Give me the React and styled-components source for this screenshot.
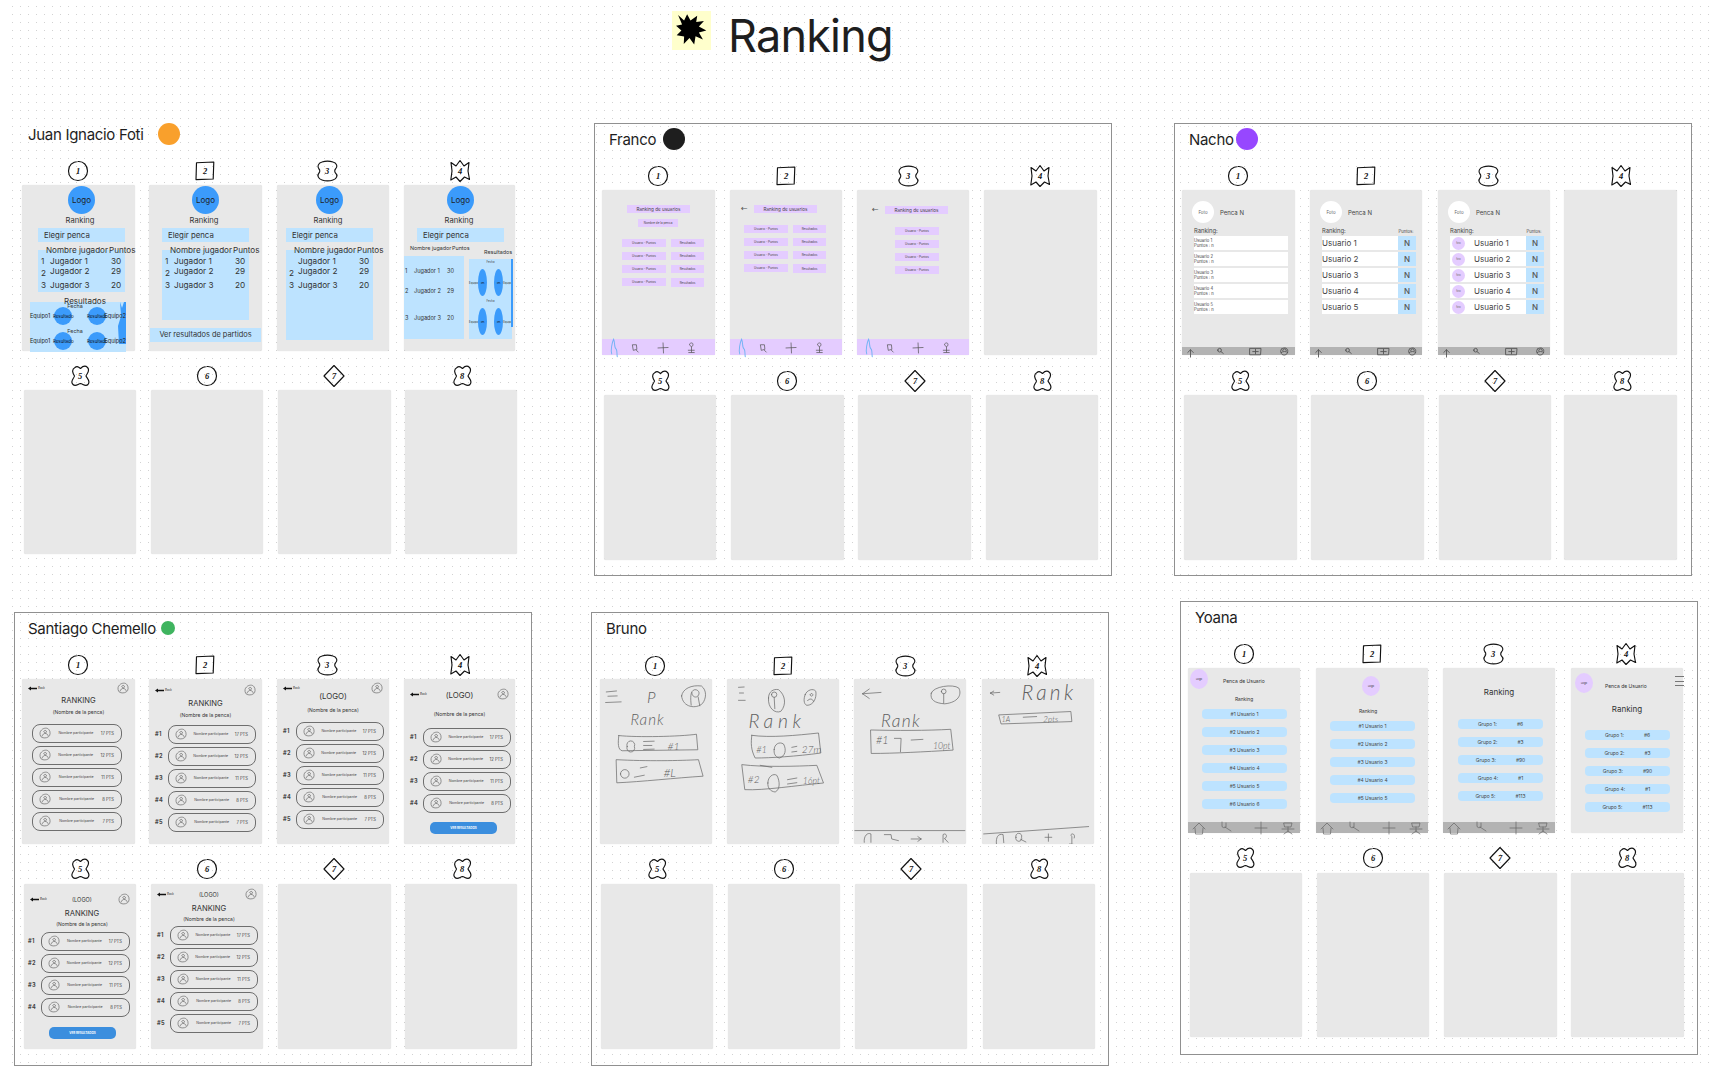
import React from "react";
import styled, { createGlobalStyle } from "styled-components";

const GlobalStyle = createGlobalStyle`
  body {
    margin: 0;
    background: #fff;
    overflow: hidden;
    font-family: Inter, "Liberation Sans", sans-serif;
    color: #1e1e1e;
  }
`;

const BLUE = "#bde3ff";
const VIOLET = "#e4ccff";
const LOGO_BLUE = "#3b9bfb";
const GREY_BAR = "#b3b3b3";

/* ---------- board ---------- */

const Board = styled.main`
  position: relative;
  box-sizing: border-box;
  width: 1722px;
  height: 1070px;
  padding-left: 8px;
  padding-right: 8px;
  background-color: #fff;
  background-image: radial-gradient(circle at 4.5px 4.5px, #d2d2d2 0.7px, transparent 0.95px);
  background-size: 8px 8px;
  background-position: 0 2px;
  background-clip: content-box;
  overflow: hidden;
`;

const TitleBlock = styled.header`
  position: absolute;
  left: 672px;
  top: 11px;
  display: flex;
  align-items: center;
  gap: 17px;
  height: 39px;
`;

const StickyNote = styled.div`
  width: 39px;
  height: 39px;
  background: #ffffcc;
`;

const PageTitle = styled.h1`
  margin: 0;
  font-size: 45px;
  font-weight: 400;
  letter-spacing: -0.8px;
  line-height: 46px;
  position: relative;
  top: 5px;
  color: #1e1e1e;
`;

const Frame = styled.section`
  position: absolute;
  box-sizing: border-box;
  left: ${(p) => p.$x}px;
  top: ${(p) => p.$y}px;
  width: ${(p) => p.$w}px;
  height: ${(p) => p.$h}px;
  border: 1px solid #909090;
`;

const OwnerTag = styled.div`
  position: absolute;
  left: ${(p) => p.$x}px;
  top: ${(p) => p.$y - 11}px;
  height: 22px;
  display: flex;
  align-items: center;
`;

const OwnerName = styled.h2`
  margin: 0;
  font-size: 15px;
  font-weight: 400;
  letter-spacing: -0.3px;
  white-space: nowrap;
  color: #1e1e1e;
`;

const OwnerDot = styled.span`
  position: absolute;
  left: ${(p) => p.$left}px;
  top: ${(p) => 11 - p.$size / 2}px;
  width: ${(p) => p.$size}px;
  height: ${(p) => p.$size}px;
  border-radius: 50%;
  background: ${(p) => p.$color};
`;

const Phone = styled.article`
  position: absolute;
  box-sizing: border-box;
  left: ${(p) => p.$x}px;
  top: ${(p) => p.$y}px;
  width: ${(p) => p.$w}px;
  height: ${(p) => p.$h}px;
  display: flex;
  flex-direction: column;
  background: #e8e8e8;
  border-radius: 2px;
  box-shadow: 0 0 1px rgba(0, 0, 0, 0.18);
`;

/* ---------- numbered badges ---------- */

const BadgeWrap = styled.div`
  position: absolute;
  left: ${(p) => p.$x - 12}px;
  top: ${(p) => p.$y - 12}px;
  width: 24px;
  height: 24px;
`;

const BadgeNumber = styled.span`
  position: absolute;
  inset: 0;
  display: flex;
  align-items: center;
  justify-content: center;
  font: italic 700 8.5px "Liberation Serif", serif;
  color: #111;
`;

const PEANUT = "M7 3C10 2 15 2 18 3C22 4 23 8 20.5 10C19.5 11 19.5 13 20.5 14C23 16 22 20 18 21C15 22 10 22 7 21C3 20 2 16 4 14C5 13 5 11 4 10C2 8 3 4 7 3Z";
const CROSS = "M7 3.5C9 1.5 11 3 12.5 4.5C14 3 17 1 19.5 3.5C22.5 6.5 19 9.5 18 12C19 14.5 23 17 20 20.5C17.5 23 15 20 12.5 19.5C10 20 7.5 23 5 20.5C1.5 17.5 6 14.5 6.5 12C5 9.5 3 5.5 7 3.5Z";
const BADGE_SHAPES = [
  "M12 2.5C17.5 2 21.5 6.5 21.5 12C21.5 17.5 17 21.5 12 21.5C6.5 21.5 2.5 17.5 2.5 12C2.5 6.5 6.5 2.5 12 2.5Z",
  "M3.5 3.8L20.8 3L20.2 20L3 20.6Z",
  PEANUT,
  "M3 3.5L8 7L12 1.5L16 7L21 3.5L20 12L21.5 20.5L16.5 18L12 22.5L8 18L2.8 21L4 12Z",
  CROSS,
  "M12 2.5C17.5 2 21.5 6.5 21.5 12C21.5 17.5 17 21.5 12 21.5C6.5 21.5 2.5 17.5 2.5 12C2.5 6.5 6.5 2.5 12 2.5Z",
  "M12 1.5L22 12L12 22.5L2 12Z",
  CROSS,
];

function Badge({ x, y, n }) {
  return (
    <BadgeWrap $x={x} $y={y}>
      <svg width="24" height="24" viewBox="0 0 24 24" fill="none" stroke="#111" strokeWidth="1.15" strokeLinejoin="round">
        <path d={BADGE_SHAPES[n - 1]} />
      </svg>
      <BadgeNumber>{n}</BadgeNumber>
    </BadgeWrap>
  );
}

/* ---------- toolbar icons ---------- */

function Sketch({ size = 11, color = "#555", width = 0.8, children }) {
  return (
    <svg width={size} height={size} viewBox="0 0 12 12" fill="none" stroke={color} strokeWidth={width} strokeLinecap="round" style={{ overflow: "visible" }}>
      {children}
    </svg>
  );
}

const ScribbleHome = () => (
  <Sketch color="#76b4f5" width={1.1}>
    <path d="M3 13C1.5 9 3.5 0 5 -3C7 1 5 6 8 8C9 10 8.5 13 9 16" />
  </Sketch>
);
const ScribbleSearch = () => (
  <Sketch>
    <path d="M3 3L7 3L7.5 8L4 9ZM7 9L9 11" />
  </Sketch>
);
const ScribblePlus = () => (
  <Sketch>
    <path d="M0 6.5L11 6M5.5 1L6 12" />
  </Sketch>
);
const ScribblePerson = () => (
  <Sketch>
    <path d="M4 2C6 0 8 1 7.5 3.5C7 5.5 5 5.5 4.5 4ZM6 5.5L6 11M2.5 9L9 9M3 11.5L9 11.5" />
  </Sketch>
);
const UpArrow = () => (
  <Sketch color="#555" width={1}>
    <path d="M6 11L6 3M3 6L6 3L9 6" />
  </Sketch>
);
const TinySearch = () => (
  <Sketch color="#555" width={1}>
    <path d="M3 3.5A2 2 0 1 1 7 3.5A2 2 0 1 1 3 3.5ZM6.5 5L9 7" />
  </Sketch>
);
const FolderPlus = () => (
  <Sketch color="#555" width={1}>
    <path d="M0 1.5L12 1.5L11.5 8.5L0 8.5ZM3 5L9 5M6 2.5L6 7.5" />
  </Sketch>
);
const UserRing = () => (
  <Sketch color="#555" width={1}>
    <path d="M3 2C6 0 10 1 9.5 5C9.5 9 4 10 2.5 7C1.5 5 1.5 3.5 3 2ZM4 4A2 2 0 0 1 8 4M2.5 6C4 4.5 8 4.5 9.5 6" />
  </Sketch>
);
const HouseLine = () => (
  <Sketch size={12} color="#666" width={0.7}>
    <path d="M0 7L6 1L12 7M2 6L2.5 12L9.5 12L10 6" />
  </Sketch>
);
const MagnifierLine = () => (
  <Sketch size={12} color="#666" width={0.7}>
    <path d="M1 0L1 4C1 6 4 6 5 5L5 1M4 5L10 9" />
  </Sketch>
);
const PlusLine = () => (
  <Sketch size={12} color="#666" width={0.7}>
    <path d="M0 6L12 6M6 0L6 12" />
  </Sketch>
);
const PersonLine = () => (
  <Sketch size={12} color="#666" width={0.7}>
    <path d="M2 1L10 1L9 5L3 5ZM6 5L6 9M0 7L12 7M6 9L2 12M6 9L10 12" />
  </Sketch>
);

const Toolbar = styled.nav`
  display: grid;
  grid-template-columns: ${(p) => p.$cols};
  align-items: center;
  justify-items: start;
  box-sizing: border-box;
  margin-top: auto;
  height: ${(p) => p.$h}px;
  padding-left: ${(p) => p.$left}px;
  background: ${(p) => p.$bg};
`;

/* ---------- Juan ---------- */

const JuanColumn = styled.div`
  width: 87px;
  margin-left: ${(p) => p.$inset}px;
  display: flex;
  flex-direction: column;
  padding-top: 1px;
`;

const LogoCircle = styled.div`
  align-self: center;
  width: 27px;
  height: 28px;
  border-radius: 50%;
  background: ${LOGO_BLUE};
  display: flex;
  align-items: center;
  justify-content: center;
  font-size: 8px;
  color: #1e1e1e;
`;

const JuanTitle = styled.div`
  text-align: center;
  margin: 2px 3px 0 0;
  font-size: 7.6px;
  line-height: 10px;
  color: #333;
`;

const PickerBar = styled.div`
  margin-top: 2px;
  height: 14px;
  line-height: 14px;
  padding-left: 6px;
  font-size: 7.8px;
  background: ${BLUE};
  color: #333;
`;

const TableHead = styled.div`
  display: flex;
  gap: 1px;
  margin-top: 3px;
  height: 10px;
  padding-left: 8px;
  font-size: 8.1px;
  line-height: 10px;
  white-space: nowrap;
  color: #333;
  position: relative;
  z-index: 1;
`;

const ScorePanel = styled.div`
  margin-top: -5px;
  padding-top: 6px;
  height: ${(p) => p.$h}px;
  box-sizing: border-box;
  background: ${BLUE};
`;

const ScoreRow = styled.div`
  display: grid;
  grid-template-columns: 12px 61px 13px;
  height: ${(p) => p.$h}px;
  line-height: 10px;
  font-size: 8.2px;
  color: #333;
`;

const ScoreRank = styled.span`
  padding-left: 3px;
  position: relative;
  top: ${(p) => p.$drop || 0}px;
`;

const ResultsPanel = styled.div`
  position: relative;
  box-sizing: border-box;
  margin: 10px 0 0 -8px;
  width: 96px;
  height: 50px;
  background: ${BLUE};
`;

const ResultsTitle = styled.div`
  position: absolute;
  top: -6px;
  left: 14px;
  right: 0;
  text-align: center;
  font-size: 8px;
  line-height: 10px;
  color: #333;
`;

const MatchStack = styled.div`
  display: flex;
  flex-direction: column;
  gap: 3px;
  padding-top: 1px;
`;

const Match = styled.div`
  display: flex;
  flex-direction: column;
  align-items: center;
  height: 22px;
`;

const MatchDate = styled.div`
  font-size: 5.4px;
  line-height: 6px;
  margin-right: 6px;
  height: 4px;
  color: #333;
`;

const MatchLine = styled.div`
  display: flex;
  align-items: center;
  width: 96px;
  justify-content: space-between;
  font-size: 5.6px;
  color: #222;
  position: relative;
  z-index: 1;
`;

const ResultBubble = styled.div`
  width: 18px;
  height: 18px;
  border-radius: 50%;
  background: ${LOGO_BLUE};
  display: flex;
  align-items: center;
  justify-content: center;
  font-size: 4.4px;
  color: #111;
`;

const BubblePair = styled.div`
  display: flex;
  gap: 16px;
  margin: 0 -8px 0 -2px;
`;

const Ribbon = styled.svg`
  position: absolute;
  right: 0;
  top: 0;
`;

const WideBar = styled.div`
  margin: ${(p) => p.$top}px 0 0 1px;
  width: 111px;
  height: 14px;
  line-height: 14px;
  text-align: center;
  font-size: 7.4px;
  background: ${BLUE};
  color: #333;
`;

const NarrowHead = styled.div`
  display: flex;
  height: 8px;
  font-size: 5.4px;
  line-height: 8px;
  padding-left: 6px;
  white-space: nowrap;
  color: #333;
  margin-top: 2px;
`;

const NarrowHeadCell = styled.span`
  width: ${(p) => p.$w}px;
  position: relative;
  top: ${(p) => p.$drop || 0}px;
`;

const SplitPanels = styled.div`
  display: flex;
  gap: 5px;
  align-items: flex-end;
  height: 83px;
  margin-top: 4px;
`;

const LeftPanel = styled.div`
  box-sizing: border-box;
  width: 60px;
  height: 83px;
  padding-top: 11px;
  background: ${BLUE};
`;

const NarrowRow = styled.div`
  display: grid;
  grid-template-columns: 9px 33px 12px;
  height: ${(p) => p.$h}px;
  font-size: 5.6px;
  line-height: 8px;
  padding-left: 1px;
  color: #333;
`;

const RightPanel = styled.div`
  position: relative;
  box-sizing: border-box;
  width: 43px;
  height: 80px;
  padding-top: 1px;
  background: ${BLUE};
`;

const TallMatch = styled.div`
  display: flex;
  flex-direction: column;
  align-items: center;
  margin-bottom: 3px;
`;

const TinyDate = styled.div`
  font-size: 2.8px;
  height: 9px;
  line-height: 4px;
  color: #444;
`;

const TallLine = styled.div`
  display: flex;
  align-items: center;
  justify-content: space-between;
  width: 43px;
  font-size: 2.8px;
  color: #333;
`;

const TallBubble = styled.div`
  width: 9px;
  height: 27px;
  border-radius: 50%;
  background: ${LOGO_BLUE};
  display: flex;
  align-items: center;
  justify-content: center;
  font-size: 2px;
  color: #111;
`;

const TallPair = styled.div`
  display: flex;
  gap: 7px;
`;

const RightStripe = styled.span`
  position: absolute;
  right: -1px;
  top: 0;
  width: 2px;
  height: 68px;
  background: ${LOGO_BLUE};
`;

const juanScores = [
  { rank: "1", name: "Jugador 1", pts: 30, h: 10 },
  { rank: "2", name: "Jugador 2", pts: 29, h: 14, drop: 2 },
  { rank: "3", name: "Jugador 3", pts: 20, h: 10 },
];

function JuanHeader() {
  return (
    <>
      <LogoCircle>Logo</LogoCircle>
      <JuanTitle>Ranking</JuanTitle>
      <PickerBar>Elegir penca</PickerBar>
    </>
  );
}

function JuanTable({ h, hideFirstRank }) {
  return (
    <>
      <TableHead>
        <span>Nombre jugador</span>
        <span>Puntos</span>
      </TableHead>
      <ScorePanel $h={h}>
        {juanScores.map((row, i) => (
          <ScoreRow key={row.name} $h={row.h}>
            <ScoreRank $drop={row.drop}>{hideFirstRank && i === 0 ? "" : row.rank}</ScoreRank>
            <span>{row.name}</span>
            <span>{row.pts}</span>
          </ScoreRow>
        ))}
      </ScorePanel>
    </>
  );
}

function JuanMatch() {
  return (
    <Match>
      <MatchDate>Fecha</MatchDate>
      <MatchLine>
        <span>Equipo1</span>
        <BubblePair>
          <ResultBubble>Resultado</ResultBubble>
          <ResultBubble>Resultado</ResultBubble>
        </BubblePair>
        <span>Equipo2</span>
      </MatchLine>
    </Match>
  );
}

function JuanOne() {
  return (
    <JuanColumn $inset={16}>
      <JuanHeader />
      <JuanTable h={42} />
      <ResultsPanel>
        <ResultsTitle>Resultados</ResultsTitle>
        <MatchStack>
          <JuanMatch />
          <JuanMatch />
        </MatchStack>
        <Ribbon width="8" height="42" viewBox="0 0 8 42">
          <path d="M2 0L4 6L6 0L8 0L8 42L1 42L0 24L3 14Z" fill={LOGO_BLUE} />
        </Ribbon>
      </ResultsPanel>
    </JuanColumn>
  );
}

function JuanTwo() {
  return (
    <>
      <JuanColumn $inset={13}>
        <JuanHeader />
        <JuanTable h={70} />
      </JuanColumn>
      <WideBar $top={8}>Ver resultados de partidos</WideBar>
    </>
  );
}

function JuanThree() {
  return (
    <JuanColumn $inset={9}>
      <JuanHeader />
      <JuanTable h={90} hideFirstRank />
    </JuanColumn>
  );
}

function TallMatchRow() {
  return (
    <TallMatch>
      <TinyDate>Fecha</TinyDate>
      <TallLine>
        <span>Equipo</span>
        <TallPair>
          <TallBubble>Res</TallBubble>
          <TallBubble>Res</TallBubble>
        </TallPair>
        <span>Equipo</span>
      </TallLine>
    </TallMatch>
  );
}

function JuanFour() {
  return (
    <>
      <JuanColumn $inset={13}>
        <JuanHeader />
      </JuanColumn>
      <NarrowHead>
        <NarrowHeadCell $w={42}>Nombre jugador</NarrowHeadCell>
        <NarrowHeadCell $w={32}>Puntos</NarrowHeadCell>
        <NarrowHeadCell $w={20} $drop={4}>Resultados</NarrowHeadCell>
      </NarrowHead>
      <SplitPanels>
        <LeftPanel>
          <NarrowRow $h={20}><span>1</span><span>Jugador 1</span><span>30</span></NarrowRow>
          <NarrowRow $h={27}><span>2</span><span>Jugador 2</span><span>29</span></NarrowRow>
          <NarrowRow $h={10}><span>3</span><span>Jugador 3</span><span>20</span></NarrowRow>
        </LeftPanel>
        <RightPanel>
          <RightStripe />
          <TallMatchRow />
          <TallMatchRow />
        </RightPanel>
      </SplitPanels>
    </>
  );
}

/* ---------- Franco ---------- */

const FrancoBody = styled.div`
  flex: 1;
  display: flex;
  flex-direction: column;
  padding: ${(p) => p.$top}px 0 0 ${(p) => p.$left}px;
`;

const ChipRow = styled.div`
  display: flex;
  align-items: center;
`;

const BackArrow = styled.span`
  width: ${(p) => p.$w}px;
  font-size: 8px;
  line-height: 8px;
  color: #555;
  font-family: "DejaVu Sans", sans-serif;
`;

const Chip = styled.div`
  box-sizing: border-box;
  width: ${(p) => p.$w}px;
  height: ${(p) => p.$h || 8}px;
  margin-top: ${(p) => p.$mt || 0}px;
  margin-left: ${(p) => p.$ml || 0}px;
  display: flex;
  align-items: center;
  justify-content: center;
  background: ${VIOLET};
  font-size: ${(p) => p.$size || 3}px;
  white-space: nowrap;
  color: #444;
`;

const FrancoGrid = styled.div`
  display: grid;
  grid-template-columns: ${(p) => (p.$results ? "49px 34px" : "44px")};
  row-gap: 5px;
  margin: ${(p) => p.$top}px 0 0 ${(p) => p.$left}px;
`;

const francoBar = (
  <Toolbar $h={16} $left={7} $bg={VIOLET} $cols="21px 28px 28px 28px">
    <ScribbleHome />
    <ScribbleSearch />
    <ScribblePlus />
    <ScribblePerson />
  </Toolbar>
);

function FrancoRows({ results, top, left }) {
  return (
    <FrancoGrid $results={results} $top={top} $left={left}>
      {[0, 1, 2, 3].map((i) => (
        <React.Fragment key={i}>
          <Chip $w={44}>Usuario - Puntos</Chip>
          {results && <Chip $w={33} $h={i === 3 ? 9 : 8}>Resultados</Chip>}
        </React.Fragment>
      ))}
    </FrancoGrid>
  );
}

function FrancoOne() {
  return (
    <>
      <FrancoBody $top={15} $left={25}>
        <Chip $w={63} $size={4.6}>Ranking de usuarios</Chip>
        <Chip $w={40} $mt={6} $ml={11}>Nombre de la penca</Chip>
        <FrancoRows results top={12} left={-5} />
      </FrancoBody>
      {francoBar}
    </>
  );
}

function FrancoTwo() {
  return (
    <>
      <FrancoBody $top={15} $left={11}>
        <ChipRow>
          <BackArrow $w={13}>←</BackArrow>
          <Chip $w={63} $size={4.6}>Ranking de usuarios</Chip>
        </ChipRow>
        <FrancoRows results top={12} left={3} />
      </FrancoBody>
      {francoBar}
    </>
  );
}

function FrancoThree() {
  return (
    <>
      <FrancoBody $top={16} $left={15}>
        <ChipRow>
          <BackArrow $w={13}>←</BackArrow>
          <Chip $w={63} $size={4.6}>Ranking de usuarios</Chip>
        </ChipRow>
        <FrancoRows top={13} left={23} />
      </FrancoBody>
      {francoBar}
    </>
  );
}

/* ---------- Nacho ---------- */

const NachoBody = styled.div`
  flex: 1;
  padding: 11px 7px 0 ${(p) => p.$left}px;
`;

const PencaRow = styled.div`
  display: flex;
  align-items: center;
  gap: 6px;
  margin-left: ${(p) => p.$ml}px;
  font-size: 6px;
  color: #444;
`;

const PhotoCircle = styled.div`
  width: 22px;
  height: 22px;
  border-radius: 50%;
  background: #fff;
  display: flex;
  align-items: center;
  justify-content: center;
  font-size: 4.4px;
  color: #666;
`;

const RankHead = styled.div`
  display: flex;
  justify-content: space-between;
  align-items: flex-end;
  margin-top: 3px;
  height: 8px;
  font-size: 5.8px;
  color: #444;
`;

const PointsLabel = styled.span`
  font-size: 4.2px;
  width: 18px;
  text-align: center;
`;

const NachoList = styled.div`
  display: flex;
  flex-direction: column;
  gap: 2px;
  margin-top: 2px;
`;

const NachoRow = styled.div`
  display: flex;
  align-items: center;
  height: 14px;
  width: 94px;
  background: #fff;
`;

const StackedUser = styled.div`
  font-size: 4.2px;
  line-height: 5.4px;
  color: #444;
`;

const UserName = styled.span`
  flex: 1;
  font-size: 8px;
  color: #444;
`;

const NBox = styled.div`
  width: 18px;
  height: 14px;
  display: flex;
  align-items: center;
  justify-content: center;
  background: ${BLUE};
  font-size: 8px;
  font-weight: 500;
  color: #555;
`;

const MiniPhoto = styled.div`
  width: 13px;
  height: 13px;
  margin: 0 9px 0 2px;
  border-radius: 50%;
  background: ${VIOLET};
  display: flex;
  align-items: center;
  justify-content: center;
  font-size: 2.4px;
  color: #666;
`;

const nachoBar = (
  <Toolbar $h={8} $left={3} $bg={GREY_BAR} $cols="30px 35px 29px 20px">
    <UpArrow />
    <TinySearch />
    <FolderPlus />
    <UserRing />
  </Toolbar>
);

const usuarios = [1, 2, 3, 4, 5];

function NachoScreen({ kind, left, penca }) {
  return (
    <>
      <NachoBody $left={left}>
        <PencaRow $ml={penca}>
          <PhotoCircle>Foto</PhotoCircle>
          <span>Penca N</span>
        </PencaRow>
        <RankHead>
          <span>Ranking:</span>
          {kind !== "plain" && <PointsLabel>Puntos:</PointsLabel>}
        </RankHead>
        <NachoList>
          {usuarios.map((n) => (
            <NachoRow key={n}>
              {kind === "plain" && (
                <StackedUser>
                  Usuario {n}
                  <br />
                  Puntos : n
                </StackedUser>
              )}
              {kind === "photo" && <MiniPhoto>foto</MiniPhoto>}
              {kind !== "plain" && <UserName>Usuario {n}</UserName>}
              {kind !== "plain" && <NBox>N</NBox>}
            </NachoRow>
          ))}
        </NachoList>
      </NachoBody>
      {nachoBar}
    </>
  );
}

/* ---------- Santiago ---------- */

const BackLink = styled.div`
  display: flex;
  align-items: center;
  gap: 1px;
  font-size: 3px;
  color: #333;
`;

const TopBar = styled.div`
  position: absolute;
  left: 6px;
  right: 6px;
  top: ${(p) => p.$y - 6}px;
  height: 12px;
  display: flex;
  align-items: center;
  justify-content: space-between;
`;

const HeadText = styled.div`
  text-align: center;
  margin-top: ${(p) => p.$mt || 0}px;
  padding-left: ${(p) => p.$nudge || 0}px;
  font-size: ${(p) => p.$size}px;
  line-height: ${(p) => p.$lh}px;
  color: #333;
`;

const SantiagoBody = styled.div`
  padding-top: ${(p) => p.$top}px;
`;

const PillList = styled.div`
  display: flex;
  flex-direction: column;
  gap: 3.5px;
  margin-top: ${(p) => p.$mt}px;
  padding-left: ${(p) => p.$left}px;
`;

const PillRow = styled.div`
  display: flex;
  align-items: center;
`;

const PillRank = styled.span`
  width: 13px;
  font-size: 5.6px;
  font-weight: 700;
  letter-spacing: 0.4px;
  color: #444;
`;

const Pill = styled.div`
  box-sizing: border-box;
  width: ${(p) => p.$w}px;
  height: 18.5px;
  display: flex;
  align-items: center;
  padding: 0 7px 0 6px;
  border: 1px solid #6e6e6e;
  border-bottom-width: 1.4px;
  border-radius: 8px;
`;

const PillName = styled.span`
  flex: 1;
  text-align: center;
  font-size: 3.6px;
  color: #444;
`;

const PillPoints = styled.span`
  font-size: 4.2px;
  color: #444;
`;

const ResultsButton = styled.div`
  position: absolute;
  left: ${(p) => p.$x}px;
  top: 143px;
  width: 67px;
  height: 12px;
  border-radius: 5px;
  background: #3b8ede;
  display: flex;
  align-items: center;
  justify-content: center;
  font-size: 3px;
  font-weight: 700;
  color: #fff;
`;

function CloudAvatar({ size = 12 }) {
  return (
    <svg width={size} height={size} viewBox="0 0 14 14" fill="none" stroke="#666" strokeWidth="0.8">
      <path d="M3 3.5C5 1 10 0.5 11.5 3C13.5 5 13.5 10 11 11.5C8 13.5 3.5 13 2 11C0.5 8 1 5 3 3.5Z" />
      <path d="M5.5 5.5C6 3.5 8.5 3.5 8.8 5.5C9 6.8 6.5 7.4 5.5 5.5ZM3.5 11C4 8.5 6 7.5 7 7.5C9 7.5 10.5 9 10.8 10.5" />
    </svg>
  );
}

function ThickBack() {
  return (
    <BackLink>
      <svg width="9" height="5" viewBox="0 0 9 5">
        <path d="M0 2.5L3 0.5L3 1.7L9 1.7L9 3.3L3 3.3L3 4.5Z" fill="#111" />
      </svg>
      <span>Back</span>
    </BackLink>
  );
}

const santiagoPoints = [17, 12, 11, 8, 7];

function SantiagoScreen({ back, top, nudge, heads, gap, pills, ranks, left, w, button }) {
  return (
    <>
      <TopBar $y={back}>
        <ThickBack />
        <CloudAvatar />
      </TopBar>
      <SantiagoBody $top={top}>
        {heads.map((head) => (
          <HeadText key={head.text} $mt={head.mt} $nudge={nudge} $size={head.size} $lh={head.lh}>
            {head.text}
          </HeadText>
        ))}
        <PillList $mt={gap} $left={left}>
          {santiagoPoints.slice(0, pills).map((pts, i) => (
            <PillRow key={pts}>
              {ranks && <PillRank>#{i + 1}</PillRank>}
              <Pill $w={w}>
                <CloudAvatar size={12} />
                <PillName>Nombre participante</PillName>
                <PillPoints>{pts} PTS</PillPoints>
              </Pill>
            </PillRow>
          ))}
        </PillList>
      </SantiagoBody>
      {button !== undefined && <ResultsButton $x={button}>VER RESULTADOS</ResultsButton>}
    </>
  );
}

const RANKING_HEAD = { text: "RANKING", size: 7.6, lh: 10 };
const LOGO_HEAD = { text: "(LOGO)", size: 7.8, lh: 10 };
const SMALL_LOGO = { text: "(LOGO)", size: 5.6, lh: 10 };
const penca = (mt) => ({ text: "(Nombre de la penca)", size: 5, lh: 7, mt });

/* ---------- Bruno: pencil sketches ---------- */

const SketchSheet = styled.svg`
  width: 100%;
  height: 100%;
  display: block;
`;

const Pencil = styled.g`
  fill: none;
  stroke: #6a6a6a;
  stroke-width: 2.2;
  stroke-linecap: round;
  stroke-linejoin: round;
`;

const Scrawl = styled.text`
  font-family: Lato, "Open Sans", sans-serif;
  font-style: italic;
  font-weight: 300;
  fill: #5f5f5f;
  font-size: ${(p) => p.$size}px;
  letter-spacing: ${(p) => p.$gap || 0}px;
`;

function BrunoOne() {
  return (
    <SketchSheet viewBox="8 3 339 495">
      <Pencil>
        <path d="M27 40L58 37M32 53L60 52M25 72L72 70" />
        <path d="M255 52C258 30 285 18 315 22C332 35 330 60 318 75C300 92 258 88 255 52Z" />
        <path d="M284 80C282 60 280 36 295 33C310 33 312 50 300 55C292 57 286 50 286 42M305 55L310 82" />
        <path d="M65 172C120 178 250 175 300 168L304 215L75 218C62 215 62 195 65 172Z" />
        <path d="M90 205A12 12 0 1 1 112 205A12 12 0 1 1 90 205ZM140 190L172 189M140 202L165 202M140 214L172 213" />
        <path d="M58 245C150 250 250 248 306 245L320 295C240 300 130 312 60 315Z" />
        <path d="M70 288A13 13 0 1 1 96 288A13 13 0 1 1 70 288ZM112 298L142 292M130 270L150 266" />
      </Pencil>
      <Scrawl x="150" y="72" $size={48}>P</Scrawl>
      <Scrawl x="100" y="140" $size={46} $gap={3}>Rank</Scrawl>
      <Scrawl x="212" y="216" $size={32}>#1</Scrawl>
      <Scrawl x="200" y="298" $size={36}>#L</Scrawl>
    </SketchSheet>
  );
}

function BrunoTwo() {
  return (
    <SketchSheet viewBox="391 3 335 495">
      <Pencil>
        <path d="M425 28L442 27M428 45L440 45M425 67L445 67" />
        <path d="M515 60C515 40 530 32 545 35C565 50 570 80 552 100C535 108 512 90 515 60Z" />
        <path d="M524 50A8 8 0 1 1 540 50A8 8 0 1 1 524 50ZM532 58L534 92" />
        <path d="M625 50C630 35 650 30 657 40C660 60 650 82 630 82C620 78 620 62 625 50Z" />
        <path d="M632 68C638 60 648 62 650 70M640 50A4 4 0 1 1 640 51" />
        <path d="M465 172C520 180 600 172 665 165L672 225C600 235 520 240 475 240C462 215 462 195 465 172Z" />
        <path d="M532 215C532 198 548 190 560 198C570 215 565 235 548 240C535 238 530 225 532 215ZM585 208L600 205M585 222L600 220" />
        <path d="M436 260C500 268 600 265 660 262L680 315C600 322 500 338 445 335Z" />
        <path d="M513 315C513 295 530 285 540 292C550 310 550 335 535 342C520 340 512 330 513 315ZM572 305L600 300M572 318L600 314M490 262L525 268" />
      </Pencil>
      <Scrawl x="455" y="150" $size={58} $gap={14}>Rank</Scrawl>
      <Scrawl x="478" y="226" $size={28}>#1</Scrawl>
      <Scrawl x="615" y="224" $size={30}>27m</Scrawl>
      <Scrawl x="453" y="314" $size={30}>#2</Scrawl>
      <Scrawl x="618" y="318" $size={26}>16pt</Scrawl>
    </SketchSheet>
  );
}

function BrunoThree() {
  return (
    <SketchSheet viewBox="782 208 329 492">
      <Pencil>
        <path d="M860 248L805 252M805 252L825 238M805 252L825 266" />
        <path d="M1010 250C1015 230 1075 222 1092 235C1102 255 1090 278 1050 282C1020 280 1005 270 1010 250Z" />
        <path d="M1040 245A7 7 0 1 1 1054 245A7 7 0 1 1 1040 245ZM1047 252L1047 280" />
        <path d="M830 360C900 362 1000 362 1068 358L1075 420C990 425 900 430 832 430Z" />
        <path d="M900 385L920 385L918 425M950 390L985 388" />
        <path d="M782 660L1110 660" />
        <path d="M810 695C808 675 820 665 830 670L830 695M870 672L890 672L892 685L912 690M950 685L980 685M970 678L980 685L970 692M1045 695L1045 672C1055 665 1060 680 1050 684M1050 684L1060 695" />
      </Pencil>
      <Scrawl x="860" y="350" $size={52} $gap={4}>Rank</Scrawl>
      <Scrawl x="845" y="402" $size={32}>#1</Scrawl>
      <Scrawl x="1015" y="416" $size={26}>10pt</Scrawl>
    </SketchSheet>
  );
}

function BrunoFour() {
  return (
    <SketchSheet viewBox="1158 208 332 492">
      <Pencil>
        <path d="M1182 250L1210 248M1182 250L1192 244M1182 250L1192 256" />
        <path d="M1208 315L1422 305L1425 335L1215 342Z" />
        <path d="M1280 322L1320 320" />
        <path d="M1162 670L1475 648" />
        <path d="M1200 700C1198 680 1205 668 1220 672L1222 696M1258 680A9 9 0 1 1 1275 680A9 9 0 1 1 1258 680ZM1272 686L1288 694M1345 680L1365 680M1355 670L1355 692M1425 700L1425 678C1415 668 1438 665 1432 682M1418 700L1436 702" />
      </Pencil>
      <Scrawl x="1275" y="272" $size={62} $gap={10}>Rank</Scrawl>
      <Scrawl x="1215" y="335" $size={22}>1A</Scrawl>
      <Scrawl x="1340" y="336" $size={24}>2pts</Scrawl>
    </SketchSheet>
  );
}

/* ---------- Yoana ---------- */

const YoanaBody = styled.div`
  flex: 1;
  padding-top: ${(p) => p.$top}px;
  display: flex;
  flex-direction: column;
`;

const YoanaHead = styled.div`
  display: flex;
  align-items: center;
  padding-left: ${(p) => p.$left}px;
`;

const LogoEgg = styled.div`
  width: 18px;
  height: 20px;
  flex: none;
  border-radius: 50%;
  background: ${VIOLET};
  display: flex;
  align-items: center;
  justify-content: center;
  font-size: 2.6px;
  color: #333;
`;

const YoanaText = styled.div`
  margin-left: ${(p) => p.$ml || 0}px;
  margin-top: ${(p) => p.$mt || 0}px;
  text-align: center;
  font-size: ${(p) => p.$size}px;
  line-height: ${(p) => p.$size + 3}px;
  white-space: nowrap;
  color: #333;
`;

const YoanaList = styled.div`
  display: flex;
  flex-direction: column;
  gap: 8px;
  margin: ${(p) => p.$mt}px 0 0 ${(p) => p.$left}px;
`;

const YoanaPill = styled.div`
  box-sizing: border-box;
  width: 85px;
  height: 10px;
  display: flex;
  align-items: center;
  justify-content: center;
  gap: ${(p) => p.$gap || 0}px;
  border-radius: 4px;
  background: ${BLUE};
  font-size: 4.9px;
  color: #444;
`;

const Hamburger = styled.div`
  display: flex;
  flex-direction: column;
  gap: 4px;
  margin-left: 28px;
  margin-top: -4px;
`;

const HamburgerLine = styled.span`
  display: block;
  width: 9px;
  height: 0.7px;
  background: #777;
`;

const yoanaBar = (
  <Toolbar $h={11} $left={5} $bg={GREY_BAR} $cols="28px 34px 27px 20px">
    <HouseLine />
    <MagnifierLine />
    <PlusLine />
    <PersonLine />
  </Toolbar>
);

const grupos = [
  ["Grupo 1:", "#6"],
  ["Grupo 2:", "#3"],
  ["Grupo 3:", "#90"],
  ["Grupo 4:", "#1"],
  ["Grupo 5:", "#113"],
];

function UserPills({ count, top, left }) {
  return (
    <YoanaList $mt={top} $left={left}>
      {Array.from({ length: count }, (_, i) => (
        <YoanaPill key={i}>
          #{i + 1} Usuario {i + 1}
        </YoanaPill>
      ))}
    </YoanaList>
  );
}

function GroupPills({ top, left }) {
  return (
    <YoanaList $mt={top} $left={left}>
      {grupos.map(([name, pos]) => (
        <YoanaPill key={name} $gap={20}>
          <span>{name}</span>
          <span>{pos}</span>
        </YoanaPill>
      ))}
    </YoanaList>
  );
}

function YoanaOne() {
  return (
    <>
      <YoanaBody $top={1}>
        <YoanaHead $left={2}>
          <LogoEgg>Logo</LogoEgg>
          <YoanaText $size={5} $ml={15} $mt={4}>Penca de Usuario</YoanaText>
        </YoanaHead>
        <YoanaText $size={4.8} $mt={7}>Ranking</YoanaText>
        <UserPills count={6} top={5} left={14} />
      </YoanaBody>
      {yoanaBar}
    </>
  );
}

function YoanaTwo() {
  return (
    <>
      <YoanaBody $top={8}>
        <YoanaHead $left={46}>
          <LogoEgg>Logo</LogoEgg>
        </YoanaHead>
        <YoanaText $size={4.8} $mt={12} $ml={-8}>Ranking</YoanaText>
        <UserPills count={5} top={5} left={14} />
      </YoanaBody>
      {yoanaBar}
    </>
  );
}

function YoanaThree() {
  return (
    <>
      <YoanaBody $top={19}>
        <YoanaText $size={8}>Ranking</YoanaText>
        <GroupPills top={21} left={15} />
      </YoanaBody>
      {yoanaBar}
    </>
  );
}

function YoanaFour() {
  return (
    <YoanaBody $top={5}>
      <YoanaHead $left={4}>
        <LogoEgg>Logo</LogoEgg>
        <YoanaText $size={5} $ml={12} $mt={6}>Penca de Usuario</YoanaText>
        <Hamburger>
          <HamburgerLine />
          <HamburgerLine />
          <HamburgerLine />
        </Hamburger>
      </YoanaHead>
      <YoanaText $size={8} $mt={11}>Ranking</YoanaText>
      <GroupPills top={15} left={14} />
    </YoanaBody>
  );
}

/* ---------- placement data ---------- */

const box = (x, y, right, bottom) => ({ x, y, w: right - x, h: bottom - y });

const boards = [
  {
    badges: [[78, 171], [205, 171], [327, 171], [460, 171], [80, 376], [207, 376], [334, 376], [462, 376]],
    phones: [
      box(22, 185, 135, 351), box(149, 185, 262, 351), box(277, 185, 389, 351), box(404, 185, 515, 351),
      box(24, 390, 136, 554), box(151, 390, 263, 554), box(278, 390, 391, 554), box(405, 390, 517, 554),
    ],
    screens: [<JuanOne />, <JuanTwo />, <JuanThree />, <JuanFour />],
  },
  {
    badges: [[658, 176], [786, 176], [908, 176], [1040, 176], [660, 381], [787, 381], [915, 381], [1042, 381]],
    phones: [
      box(602, 190, 715, 355), box(730, 190, 842, 355), box(857, 190, 969, 355), box(984, 190, 1097, 355),
      box(604, 395, 716, 560), box(731, 395, 844, 560), box(858, 395, 971, 560), box(986, 395, 1098, 560),
    ],
    screens: [<FrancoOne />, <FrancoTwo />, <FrancoThree />],
  },
  {
    badges: [[1238, 176], [1366, 176], [1488, 176], [1621, 176], [1240, 381], [1367, 381], [1495, 381], [1622, 381]],
    phones: [
      box(1182, 190, 1295, 355), box(1310, 190, 1422, 355), box(1438, 190, 1550, 355), box(1564, 190, 1677, 355),
      box(1184, 395, 1297, 560), box(1311, 395, 1424, 560), box(1439, 395, 1551, 560), box(1564, 395, 1677, 560),
    ],
    screens: [
      <NachoScreen kind="plain" left={12} penca={-2} />,
      <NachoScreen kind="score" left={12} penca={-2} />,
      <NachoScreen kind="photo" left={12} penca={-2} />,
    ],
  },
  {
    badges: [[78, 665], [205, 665], [327, 665], [460, 665], [80, 869], [207, 869], [334, 869], [462, 869]],
    phones: [
      box(22, 679, 135, 844), box(149, 679, 262, 844), box(277, 679, 389, 844), box(404, 679, 515, 844),
      box(24, 884, 136, 1049), box(151, 884, 263, 1049), box(278, 884, 391, 1049), box(405, 884, 517, 1049),
    ],
    screens: [
      <SantiagoScreen back={9} top={17} heads={[RANKING_HEAD, penca(2.5)]} gap={8.5} pills={5} left={10} w={90} />,
      <SantiagoScreen back={11} top={20} heads={[RANKING_HEAD, penca(2.5)]} gap={6.5} pills={5} ranks left={6} w={88} />,
      <SantiagoScreen back={9} top={12} heads={[LOGO_HEAD, penca(5.5)]} gap={8.5} pills={5} ranks left={6} w={88} />,
      <SantiagoScreen back={15} top={11} heads={[LOGO_HEAD, penca(10.5)]} gap={10.5} pills={4} ranks left={6} w={88} button={26} />,
      <SantiagoScreen back={15} top={11} nudge={4} heads={[SMALL_LOGO, { ...RANKING_HEAD, mt: 4 }, penca(1.5)]} gap={4.5} pills={4} ranks left={4} w={89} button={25} />,
      <SantiagoScreen back={10} top={6} nudge={4} heads={[SMALL_LOGO, { ...RANKING_HEAD, mt: 4 }, penca(1.5)]} gap={3.5} pills={5} ranks left={6} w={88} />,
    ],
  },
  {
    badges: [[655, 666], [783, 666], [905, 666], [1037, 666], [657, 869], [784, 869], [911, 869], [1039, 869]],
    phones: [
      box(600, 679, 712, 844), box(727, 679, 839, 844), box(854, 679, 966, 844), box(982, 679, 1094, 844),
      box(601, 884, 713, 1049), box(728, 884, 840, 1049), box(855, 884, 967, 1049), box(983, 884, 1095, 1049),
    ],
    screens: [<BrunoOne />, <BrunoTwo />, <BrunoThree />, <BrunoFour />],
  },
  {
    badges: [[1244, 654], [1372, 654], [1493, 654], [1626, 654], [1245, 858], [1373, 858], [1500, 858], [1627, 858]],
    phones: [
      box(1188, 668, 1300, 833), box(1316, 668, 1428, 833), box(1443, 668, 1555, 833), box(1571, 668, 1683, 833),
      box(1190, 873, 1302, 1037), box(1317, 873, 1429, 1037), box(1444, 873, 1557, 1037), box(1571, 873, 1684, 1037),
    ],
    screens: [<YoanaOne />, <YoanaTwo />, <YoanaThree />, <YoanaFour />],
  },
];

const owners = [
  { name: "Juan Ignacio Foti", x: 28, y: 134, dot: "#f9a02c", dotLeft: 130, dotSize: 22 },
  { name: "Franco", x: 609, y: 139, dot: "#1e1e1e", dotLeft: 54, dotSize: 22 },
  { name: "Nacho", x: 1189, y: 139, dot: "#9747ff", dotLeft: 47, dotSize: 22 },
  { name: "Santiago Chemello", x: 28, y: 628, dot: "#3fb45f", dotLeft: 133, dotSize: 14 },
  { name: "Bruno", x: 606, y: 628 },
  { name: "Yoana", x: 1195, y: 617 },
];

const frames = [
  { x: 594, y: 123, w: 518, h: 453 },
  { x: 1174, y: 123, w: 518, h: 453 },
  { x: 14, y: 612, w: 518, h: 454 },
  { x: 591, y: 612, w: 518, h: 454 },
  { x: 1180, y: 601, w: 518, h: 454 },
];

export default function App() {
  return (
    <>
      <GlobalStyle />
      <Board>
        <TitleBlock>
          <StickyNote>
            <svg width="39" height="39" viewBox="0 0 116 116">
              <polygon
                fill="#000"
                points="18,12 36,28 45,10 55,28 75,14 72,33 95,30 80,46 102,58 80,64 92,85 70,75 66,100 52,80 35,98 36,76 14,72 28,58 12,44 30,40"
              />
            </svg>
          </StickyNote>
          <PageTitle>Ranking</PageTitle>
        </TitleBlock>

        {frames.map((f) => (
          <Frame key={`${f.x}-${f.y}`} $x={f.x} $y={f.y} $w={f.w} $h={f.h} />
        ))}

        {owners.map((o) => (
          <OwnerTag key={o.name} $x={o.x} $y={o.y}>
            <OwnerName>{o.name}</OwnerName>
            {o.dot && <OwnerDot $left={o.dotLeft} $size={o.dotSize} $color={o.dot} />}
          </OwnerTag>
        ))}

        {boards.map((board, b) => (
          <React.Fragment key={b}>
            {board.badges.map(([x, y], i) => (
              <Badge key={i} x={x} y={y} n={i + 1} />
            ))}
            {board.phones.map((p, i) => (
              <Phone key={i} $x={p.x} $y={p.y} $w={p.w} $h={p.h}>
                {board.screens[i]}
              </Phone>
            ))}
          </React.Fragment>
        ))}
      </Board>
    </>
  );
}
